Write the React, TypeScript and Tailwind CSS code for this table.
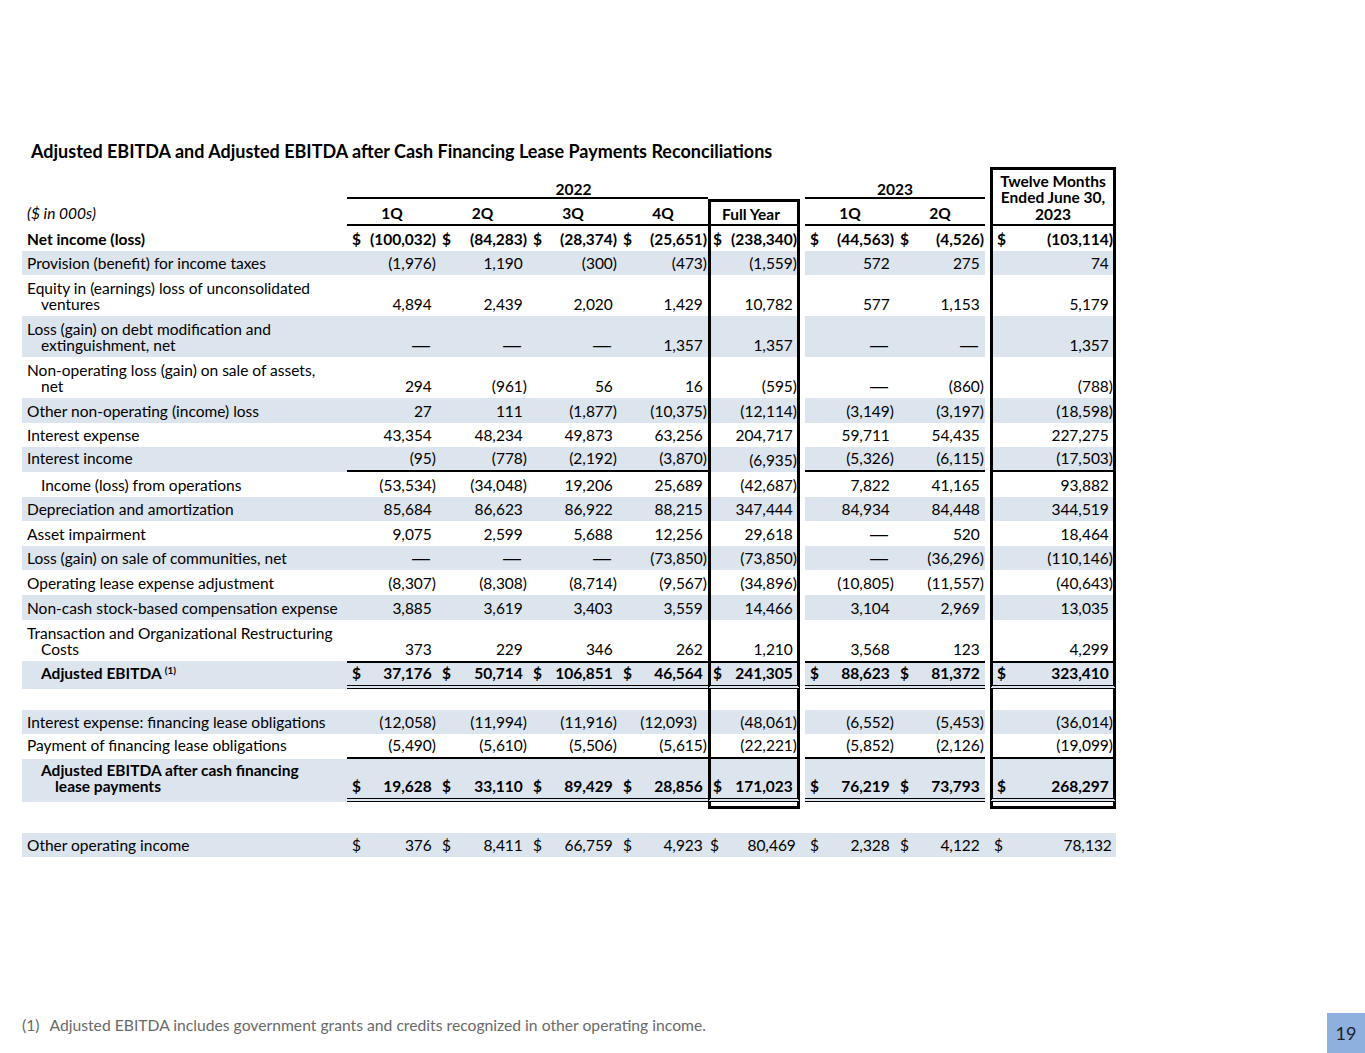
import React from 'react';

// column template: label | 1Q 2Q 3Q 4Q | Full Year | gap | 1Q 2Q | gap | TTM
const COLS = 'grid grid-cols-[325px_90px_91px_90px_90px_92px_5px_90px_90px_5px_126px]';
const SHADE = 'bg-[#dce4ee]';

type Line = 'under' | 'double' | 'topdouble';

interface Row {
  label: string[];
  vals: string[];
  h: string;
  shade?: boolean;
  bold?: boolean;
  dollar?: boolean;
  indent?: boolean;
  sup?: boolean;
  line?: Line;
  noFyLine?: boolean;
  boxed?: boolean;
  extraPr?: number[];
}

const rows: Row[] = [
  { label: ['Net income (loss)'], bold: true, dollar: true, h: 'h-[24.6px]', vals: ['(100,032)', '(84,283)', '(28,374)', '(25,651)', '(238,340)', '(44,563)', '(4,526)', '(103,114)'] },
  { label: ['Provision (benefit) for income taxes'], shade: true, h: 'h-[24.6px]', vals: ['(1,976)', '1,190', '(300)', '(473)', '(1,559)', '572', '275', '74'] },
  { label: ['Equity in (earnings) loss of unconsolidated', 'ventures'], h: 'h-[41px]', vals: ['4,894', '2,439', '2,020', '1,429', '10,782', '577', '1,153', '5,179'] },
  { label: ['Loss (gain) on debt modification and', 'extinguishment, net'], shade: true, h: 'h-[41px]', vals: ['—', '—', '—', '1,357', '1,357', '—', '—', '1,357'] },
  { label: ['Non-operating loss (gain) on sale of assets,', 'net'], h: 'h-[41px]', vals: ['294', '(961)', '56', '16', '(595)', '—', '(860)', '(788)'] },
  { label: ['Other non-operating (income) loss'], shade: true, h: 'h-[24.6px]', vals: ['27', '111', '(1,877)', '(10,375)', '(12,114)', '(3,149)', '(3,197)', '(18,598)'] },
  { label: ['Interest expense'], h: 'h-[24.6px]', vals: ['43,354', '48,234', '49,873', '63,256', '204,717', '59,711', '54,435', '227,275'] },
  { label: ['Interest income'], shade: true, line: 'under', noFyLine: true, h: 'h-[24.6px]', vals: ['(95)', '(778)', '(2,192)', '(3,870)', '(6,935)', '(5,326)', '(6,115)', '(17,503)'] },
  { label: ['Income (loss) from operations'], indent: true, h: 'h-[24.6px]', vals: ['(53,534)', '(34,048)', '19,206', '25,689', '(42,687)', '7,822', '41,165', '93,882'] },
  { label: ['Depreciation and amortization'], shade: true, h: 'h-[24.6px]', vals: ['85,684', '86,623', '86,922', '88,215', '347,444', '84,934', '84,448', '344,519'] },
  { label: ['Asset impairment'], h: 'h-[24.6px]', vals: ['9,075', '2,599', '5,688', '12,256', '29,618', '—', '520', '18,464'] },
  { label: ['Loss (gain) on sale of communities, net'], shade: true, h: 'h-[24.6px]', vals: ['—', '—', '—', '(73,850)', '(73,850)', '—', '(36,296)', '(110,146)'] },
  { label: ['Operating lease expense adjustment'], h: 'h-[24.6px]', vals: ['(8,307)', '(8,308)', '(8,714)', '(9,567)', '(34,896)', '(10,805)', '(11,557)', '(40,643)'] },
  { label: ['Non-cash stock-based compensation expense'], shade: true, h: 'h-[24.6px]', vals: ['3,885', '3,619', '3,403', '3,559', '14,466', '3,104', '2,969', '13,035'] },
  { label: ['Transaction and Organizational Restructuring', 'Costs'], h: 'h-[41px]', vals: ['373', '229', '346', '262', '1,210', '3,568', '123', '4,299'] },
  { label: ['Adjusted EBITDA'], sup: true, bold: true, indent: true, shade: true, dollar: true, line: 'topdouble', h: 'h-[28px]', vals: ['37,176', '50,714', '106,851', '46,564', '241,305', '88,623', '81,372', '323,410'] },
  { label: [], h: 'h-[21px]', vals: [] },
  { label: ['Interest expense: financing lease obligations'], shade: true, extraPr: [3], h: 'h-[24.6px]', vals: ['(12,058)', '(11,994)', '(11,916)', '(12,093)', '(48,061)', '(6,552)', '(5,453)', '(36,014)'] },
  { label: ['Payment of financing lease obligations'], line: 'under', h: 'h-[24.6px]', vals: ['(5,490)', '(5,610)', '(5,506)', '(5,615)', '(22,221)', '(5,852)', '(2,126)', '(19,099)'] },
  { label: ['Adjusted EBITDA after cash financing', 'lease payments'], bold: true, indent: true, shade: true, dollar: true, line: 'double', h: 'h-[43px]', vals: ['19,628', '33,110', '89,429', '28,856', '171,023', '76,219', '73,793', '268,297'] },
];

const otherRow: Row = {
  label: ['Other operating income'], shade: true, dollar: true, boxed: false, h: 'h-[24.6px]',
  vals: ['376', '8,411', '66,759', '4,923', '80,469', '2,328', '4,122', '78,132'],
};

type Kind = 'q' | 'fy' | 'ttm';
const kinds: Kind[] = ['q', 'q', 'q', 'q', 'fy', 'q', 'q', 'ttm'];

const lineCls = (line?: Line) => {
  if (line === 'under') return 'border-b-2 border-b-black';
  if (line === 'double') return 'border-b-4 [border-bottom-style:double] border-b-black';
  if (line === 'topdouble') return 'border-t-2 border-t-black border-b-4 [border-bottom-style:double] border-b-black';
  return '';
};

const labelPb = (line?: Line) => {
  if (line === 'under') return 'pb-[6px]';
  if (line === 'double' || line === 'topdouble') return 'pb-[8px]';
  return 'pb-[4px]';
};

const Value: React.FC<{ v: string }> = ({ v }) => {
  if (v === '—') {
    return (
      <span className="font-['Liberation_Sans',sans-serif] text-[18px]">
        —<span className="invisible">)</span>
      </span>
    );
  }
  return v.startsWith('(') ? <span>{v}</span> : (
    <span>
      {v}
      <span className="invisible">)</span>
    </span>
  );
};

const ValueCell: React.FC<{ row: Row; i: number }> = ({ row, i }) => {
  const kind = kinds[i];
  const boxed = row.boxed !== false && kind !== 'q';
  const v = row.vals[i];
  const showLine = !(kind === 'fy' && row.noFyLine);
  return (
    <div
      className={[
        'flex items-end justify-between pb-[4px] leading-[16px] whitespace-nowrap',
        row.shade ? SHADE : '',
        kind === 'q' ? 'pl-[5px] pr-[1px]' : '',
        kind === 'fy' ? 'pl-[2px] pr-0' : '',
        kind === 'ttm' ? 'pl-[4px] pr-0' : '',
        boxed ? 'border-x-[3px] border-x-black' : '',
        showLine ? lineCls(row.line) : '',
        row.extraPr?.includes(i) ? 'pr-[11px]' : '',
      ].join(' ')}
    >
      <span>{row.dollar ? '$' : ''}</span>
      {v !== undefined && <Value v={v} />}
    </div>
  );
};

const BodyRow: React.FC<{ row: Row }> = ({ row }) => {
  const boxed = row.boxed !== false;
  const blank = row.vals.length === 0;
  const gap = row.shade && !boxed ? SHADE : '';
  return (
    <div className={`${COLS} ${row.h} text-[15.5px] ${row.bold ? 'font-bold' : ''}`}>
      <div
        className={`flex flex-col justify-end pl-[5px] leading-[16px] whitespace-nowrap ${labelPb(row.line)} ${row.shade ? SHADE : ''}`}
      >
        {row.label.map((l, k) => (
          <div key={k} className={k === 0 ? (row.indent ? 'pl-[14px]' : '') : row.indent ? 'pl-[28px]' : 'pl-[14px]'}>
            {l}
            {row.sup && k === 0 && (
              <sup className="ml-[3px] text-[10px] leading-none">(1)</sup>
            )}
          </div>
        ))}
      </div>
      {blank ? (
        <>
          <div className="col-span-4" />
          <div className={boxed ? 'border-x-[3px] border-x-black' : ''} />
          <div className="col-span-4" />
          <div className={boxed ? 'border-x-[3px] border-x-black' : ''} />
        </>
      ) : (
        <>
          {[0, 1, 2, 3, 4].map((i) => <ValueCell key={i} row={row} i={i} />)}
          <div className={gap} />
          {[5, 6].map((i) => <ValueCell key={i} row={row} i={i} />)}
          <div className={gap} />
          <ValueCell row={row} i={7} />
        </>
      )}
    </div>
  );
};

const Header: React.FC = () => (
  <div className={`${COLS} grid-rows-[32px_27px] text-[15.5px] font-bold leading-[16px]`}>
    <div className="col-start-2 col-span-4 row-start-1 border-b-2 border-b-black" />
    <div className="col-start-2 col-span-5 row-start-1 flex items-end justify-center pb-[2px]">2022</div>
    <div className="col-start-8 col-span-2 row-start-1 flex items-end justify-center pb-0 border-b-2 border-b-black">2023</div>
    <div className="col-start-11 row-start-1 row-span-2 flex flex-col items-center justify-end pb-[2px] leading-[16.5px] border-t-[3px] border-x-[3px] border-b-2 border-black text-center">
      <span>Twelve Months</span>
      <span>Ended June 30,</span>
      <span>2023</span>
    </div>

    <div className="col-start-1 row-start-2 flex items-end pl-[5px] pb-[5px] italic font-normal">($ in 000s)</div>
    {['1Q', '2Q', '3Q', '4Q'].map((q, k) => (
      <div key={q} className={`row-start-2 ${['col-start-2', 'col-start-3', 'col-start-4', 'col-start-5'][k]} flex items-end justify-center pb-[3px] border-b-2 border-b-black`}>
        {q}
      </div>
    ))}
    <div className="col-start-6 row-start-2 flex items-end justify-center pr-[6px] pb-[2px] border-t-[3px] border-x-[3px] border-b-2 border-black">
      Full Year
    </div>
    <div className="col-start-8 row-start-2 flex items-end justify-center pb-[3px] border-b-2 border-b-black">1Q</div>
    <div className="col-start-9 row-start-2 flex items-end justify-center pb-[3px] border-b-2 border-b-black">2Q</div>
  </div>
);

const App: React.FC = () => {
  return (
    <div className="w-[1365px] h-[1053px] bg-white text-black flex flex-col font-['Lato',sans-serif]">
      <h1 className="pt-[141px] pl-[31px] text-[18px] font-bold leading-[20px]">
        Adjusted EBITDA and Adjusted EBITDA after Cash Financing Lease Payments Reconciliations
      </h1>

      <div className="mt-[6px] ml-[22px]">
        <Header />
        {rows.map((r, k) => (
          <BodyRow key={k} row={r} />
        ))}
        {/* box bottoms */}
        <div className={`${COLS} h-[7px]`}>
          <div className="col-start-6 border-x-[3px] border-b-[3px] border-black" />
          <div className="col-start-11 border-x-[3px] border-b-[3px] border-black" />
        </div>
        <div className="h-[24px]" />
        <BodyRow row={otherRow} />
      </div>

      <div className="mt-auto flex items-start justify-between">
        <p className="pl-[22px] pt-[4px] text-[15.7px] leading-[16px] text-[#6a6a6a]">
          (1)<span className="ml-[10px]">Adjusted EBITDA includes government grants and credits recognized in other operating income.</span>
        </p>
        <div className="w-[38px] h-[40px] bg-[#8eb0df] flex items-center justify-center text-[18px] text-[#222]">
          19
        </div>
      </div>
    </div>
  );
};

export default App;
